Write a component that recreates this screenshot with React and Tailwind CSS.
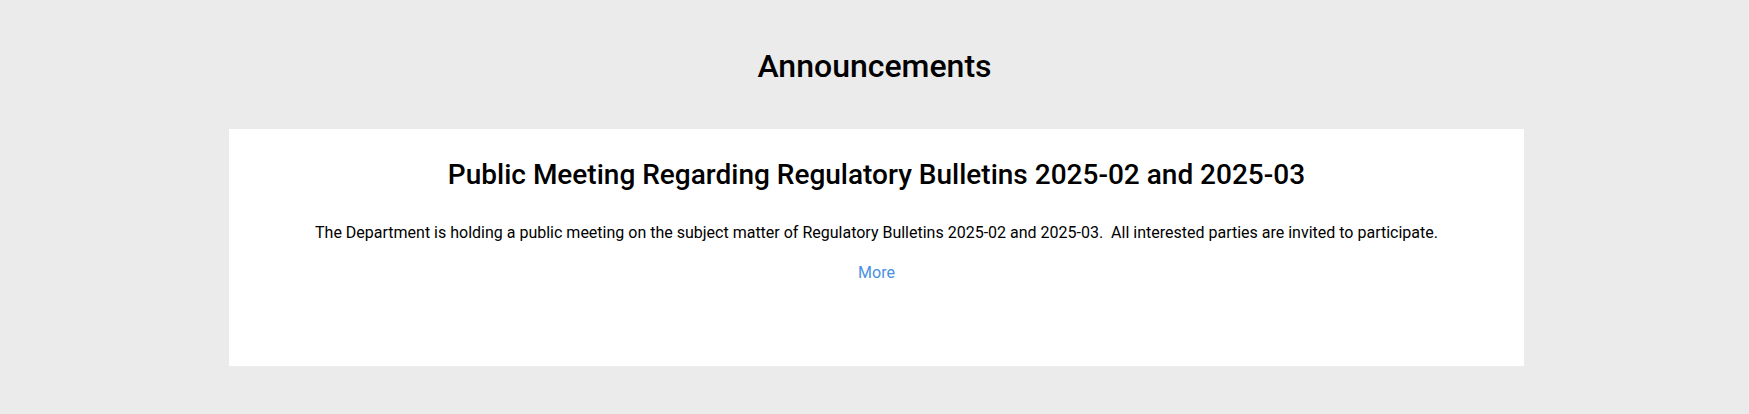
export default function App() {
  return (
    <div className="min-h-[414px] bg-[#ebebeb] pt-[48px] pb-[48px] font-['Roboto',sans-serif] text-black">
      <h2 className="text-center text-[32px] leading-[36px] font-medium">Announcements</h2>
      <div className="ml-[229px] w-[1295px] mt-[45px] h-[237px] bg-white pt-[29px] text-center">
        <h3 className="text-[28px] leading-[34px] font-medium">
          Public Meeting Regarding Regulatory Bulletins 2025-02 and 2025-03
        </h3>
        <p className="mt-[29px] text-[16px] leading-[24px] whitespace-pre">
          {"The Department is holding a public meeting on the subject matter of Regulatory Bulletins 2025-02 and 2025-03.  All interested parties are invited to participate."}
        </p>
        <a href="#" className="mt-[16px] inline-block text-[16px] leading-[24px] text-[#4a90e2]">
          More
        </a>
      </div>
    </div>
  );
}
